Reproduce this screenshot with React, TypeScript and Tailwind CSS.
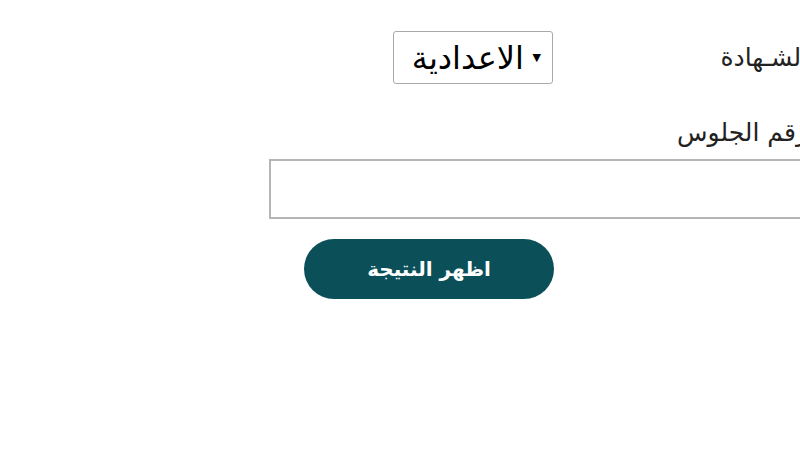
import { useState } from "react"

export default function App() {
  const [cert, setCert] = useState("prep")
  const [seat, setSeat] = useState("")

  return (
    <div className="h-[450px] w-[800px] overflow-hidden bg-white font-['DejaVu_Sans',sans-serif] text-[#222]">
      <form
        dir="rtl"
        onSubmit={(e) => e.preventDefault()}
        className="mr-[-8px] ml-[269px] flex w-[539px] flex-col pt-[31px]"
      >
        <div className="flex items-center">
          <label htmlFor="cert" className="w-[255px] text-[25px] leading-none">
            الشـهادة
          </label>
          <div className="relative">
            <select
              id="cert"
              value={cert}
              onChange={(e) => setCert(e.target.value)}
              className="h-[53px] w-[160px] appearance-none rounded-[3px] border border-[#a9a9a9] bg-white pr-[28px] pl-[4px] text-[32px] text-black"
            >
              <option value="prep">الاعدادية</option>
              <option value="primary">الابتدائية</option>
            </select>
            <span className="pointer-events-none absolute top-1/2 right-[12px] -translate-y-1/2 text-[11px] text-black">
              ▼
            </span>
          </div>
        </div>

        <label htmlFor="seat" className="mt-[36px] text-[25px] leading-none">
          رقم الجلوس
        </label>

        <input
          id="seat"
          value={seat}
          onChange={(e) => setSeat(e.target.value)}
          className="mt-[14px] h-[60px] w-full border-2 border-[#b5b5b5] bg-white px-3 text-[22px] outline-none"
        />

        <button
          type="submit"
          className="mt-[20px] mr-[254px] h-[60px] w-[250px] rounded-full bg-[#0b4f59] text-[20px] font-bold text-white"
        >
          اظهر النتيجة
        </button>
      </form>
    </div>
  )
}
